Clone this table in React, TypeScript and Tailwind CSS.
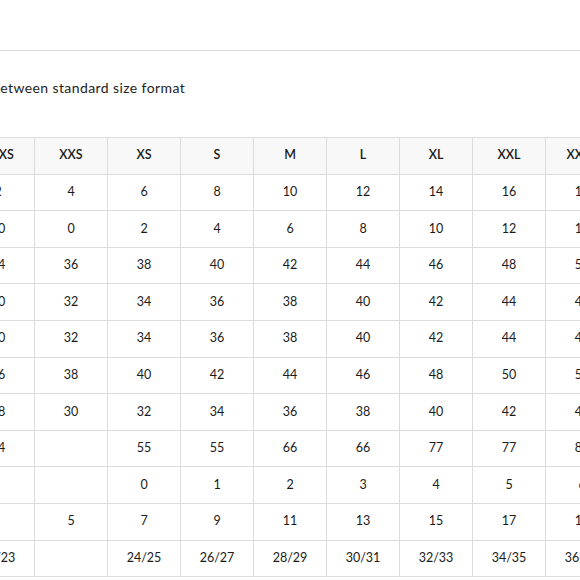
import React from 'react';

const sizes = ['XXXS', 'XXS', 'XS', 'S', 'M', 'L', 'XL', 'XXL', 'XXXL'];

const rows: string[][] = [
  ['2', '4', '6', '8', '10', '12', '14', '16', '18'],
  ['00', '0', '2', '4', '6', '8', '10', '12', '14'],
  ['34', '36', '38', '40', '42', '44', '46', '48', '50'],
  ['30', '32', '34', '36', '38', '40', '42', '44', '46'],
  ['30', '32', '34', '36', '38', '40', '42', '44', '46'],
  ['36', '38', '40', '42', '44', '46', '48', '50', '52'],
  ['28', '30', '32', '34', '36', '38', '40', '42', '44'],
  ['44', '', '55', '55', '66', '66', '77', '77', '88'],
  ['', '', '0', '1', '2', '3', '4', '5', '6'],
  ['', '5', '7', '9', '11', '13', '15', '17', '19'],
  ['22/23', '', '24/25', '26/27', '28/29', '30/31', '32/33', '34/35', '36/37'],
];

export default function App() {
  return (
    <div className="h-[580px] w-[580px] overflow-hidden bg-white font-['Lato',sans-serif] text-[#1a1a1a]">
      <div className="h-[51px] border-b border-[#dcdcdc]" />

      <div className="-ml-[39px]">
        <p className="mt-[28px] pl-[31px] text-[14px] leading-[18px] tracking-[0.4px] whitespace-nowrap text-[#222]">
          between standard size format
        </p>

        <table className="mt-[40px] w-[657px] table-fixed border-collapse text-center text-[12.5px]">
          <thead>
            <tr className="h-[36.6px] bg-[#f8f8f8]">
              {sizes.map((size) => (
                <th key={size} className="w-[73px] border border-[#dcdcdc] font-semibold">
                  {size}
                </th>
              ))}
            </tr>
          </thead>
          <tbody>
            {rows.map((row, i) => (
              <tr key={i} className="h-[36.6px]">
                {row.map((cell, j) => (
                  <td key={j} className="border border-[#dcdcdc]">
                    {cell}
                  </td>
                ))}
              </tr>
            ))}
          </tbody>
        </table>
      </div>
    </div>
  );
}
